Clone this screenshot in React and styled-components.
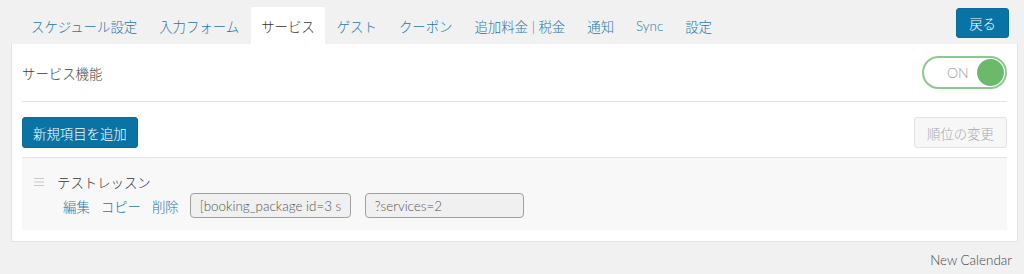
import React, { useState } from 'react';
import styled, { createGlobalStyle } from 'styled-components';

const Global = createGlobalStyle`
  body {
    margin: 0;
    background: #f1f1f1;
    font-family: "Lato", "Noto Sans CJK JP", sans-serif;
    font-size: 13.4px;
    font-weight: 300;
    color: #333;
  }
`;

const Page = styled.div`
  padding: 7px 6px 0 11px;
`;

const Header = styled.div`
  display: flex;
  align-items: flex-start;
  justify-content: space-between;
  height: 37px;
  padding-left: 10px;
  padding-right: 9px;
`;

const Tabs = styled.div`
  display: flex;
  gap: 2px;
`;

const Tab = styled.div`
  height: 37px;
  box-sizing: border-box;
  padding: 0 10px;
  display: flex;
  align-items: center;
  color: ${p => (p.$active ? '#333' : '#1f77a8')};
  background: ${p => (p.$active ? '#fff' : 'transparent')};
  white-space: nowrap;
  cursor: pointer;
`;

const Button = styled.button`
  font-family: inherit;
  font-size: 13.4px;
  font-weight: 300;
  height: ${p => p.$h || 31}px;
  padding: 0 ${p => p.$px || 11}px;
  border-radius: 3px;
  border: 1px solid ${p => (p.$disabled ? '#e2e2e2' : '#0a6a99')};
  background: ${p => (p.$disabled ? '#f7f7f7' : '#0a73a5')};
  color: ${p => (p.$disabled ? '#a7aaad' : '#fff')};
  margin-top: ${p => p.$mt || 0}px;
`;

const Panel = styled.div`
  background: #fff;
  border: 1px solid #e3e3e3;
  border-top: none;
  padding: 12px 10px 11px 10px;
`;

const Row = styled.div`
  display: flex;
  align-items: center;
  justify-content: space-between;
  border-bottom: 1px solid #e2e2e2;
  padding: ${p => p.$pad};
`;

const Label = styled.div`
  color: #3c3c3c;
`;

const Toggle = styled.div`
  width: 85px;
  height: 33px;
  box-sizing: border-box;
  border: 2px solid #8cc98c;
  border-radius: 17px;
  display: flex;
  align-items: center;
  justify-content: space-between;
  padding: 0 1px 0 23px;
  color: #9a9a9a;
  font-size: 14px;
`;

const Knob = styled.div`
  width: 27px;
  height: 27px;
  border-radius: 50%;
  background: #6cb96c;
`;

const List = styled.div`
  background: #f8f8f8;
  padding: 14px 11px 12px;
`;

const Item = styled.div`
  display: flex;
  flex-direction: column;
  gap: 1px;
`;

const TitleLine = styled.div`
  display: flex;
  align-items: center;
  gap: 12px;
  height: 20px;
`;

const Grip = styled.svg`
  width: 12px;
  height: 10px;
  flex: none;
`;

const Actions = styled.div`
  display: flex;
  align-items: center;
  padding-left: 30px;
  gap: 11px;
`;

const Link = styled.a`
  color: #1f77a8;
  cursor: pointer;
`;

const Field = styled.input`
  font-family: inherit;
  font-size: 13.4px;
  font-weight: 300;
  width: ${p => p.$w}px;
  height: 25px;
  box-sizing: border-box;
  border: 1px solid #a0a0a0;
  border-radius: 4px;
  background: #f0f0f0;
  color: #555;
  padding: 0 9px;
  margin-left: ${p => p.$ml || 0}px;
  outline: none;
`;

const Footer = styled.div`
  text-align: right;
  padding: 10px 6px 0 0;
  color: #444;
`;

const tabs = ['スケジュール設定', '入力フォーム', 'サービス', 'ゲスト', 'クーポン', '追加料金 | 税金', '通知', 'Sync', '設定'];

const App = () => {
  const [active, setActive] = useState(2);
  return (
    <Page>
      <Global />
      <Header>
        <Tabs>
          {tabs.map((t, i) => (
            <Tab key={t} $active={i === active} onClick={() => setActive(i)}>{t}</Tab>
          ))}
        </Tabs>
        <Button $h={30} $mt={1} $px={12}>戻る</Button>
      </Header>
      <Panel>
        <Row $pad="0 0 12px 0">
          <Label>サービス機能</Label>
          <Toggle>ON<Knob /></Toggle>
        </Row>
        <Row $pad="15px 0 9px 0">
          <Button $px={10}>新規項目を追加</Button>
          <Button $disabled $px={12}>順位の変更</Button>
        </Row>
        <List>
          <Item>
            <TitleLine>
              <Grip viewBox="0 0 12 10">
                <path d="M1 1.5h10M1 5h10M1 8.5h10" stroke="#c8c8c8" strokeWidth="1.2" />
              </Grip>
              <span>テストレッスン</span>
            </TitleLine>
            <Actions>
              <Link>編集</Link>
              <Link>コピー</Link>
              <Link>削除</Link>
              <Field $w={161} readOnly value="[booking_package id=3 services=2]" />
              <Field $w={159} $ml={3} readOnly value="?services=2" />
            </Actions>
          </Item>
        </List>
      </Panel>
      <Footer>New Calendar</Footer>
    </Page>
  );
};

export default App;
